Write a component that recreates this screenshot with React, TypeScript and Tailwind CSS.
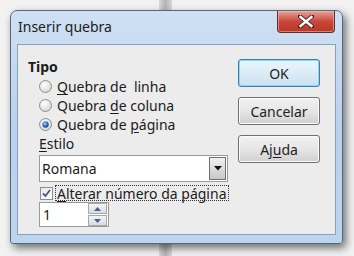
import React from "react";

const font = { fontFamily: '"Noto Sans", "Open Sans", sans-serif' };

function Radio({ checked }: { checked?: boolean }) {
  return (
    <svg width="13" height="13" viewBox="0 0 13 13" className="shrink-0">
      <defs>
        <radialGradient id={checked ? "rgc" : "rgu"} cx="40%" cy="35%" r="70%">
          <stop offset="0%" stopColor="#ffffff" />
          <stop offset="100%" stopColor="#d4d4d4" />
        </radialGradient>
        <radialGradient id="dot" cx="40%" cy="35%" r="70%">
          <stop offset="0%" stopColor="#9fd1f2" />
          <stop offset="60%" stopColor="#2a6fb4" />
          <stop offset="100%" stopColor="#1b3f6e" />
        </radialGradient>
      </defs>
      <circle cx="6.5" cy="6.5" r="6" fill={`url(#${checked ? "rgc" : "rgu"})`} stroke="#8e8f8f" />
      {checked && <circle cx="6.5" cy="6.5" r="3.2" fill="url(#dot)" />}
    </svg>
  );
}

function U({ children }: { children: React.ReactNode }) {
  return <span className="underline underline-offset-2 decoration-1">{children}</span>;
}

function Btn({ children, def }: { children: React.ReactNode; def?: boolean }) {
  return (
    <div
      className={
        "w-[82px] h-[28px] rounded-[3px] flex items-center justify-center text-[14px] text-[#1e1e1e] " +
        (def
          ? "border border-[#3c7fb1] bg-gradient-to-b from-[#eaf6fd] via-[#dcecf6] to-[#c9e0ee] shadow-[inset_0_0_0_1px_#8fd3f5]"
          : "border border-[#707070] bg-gradient-to-b from-[#f2f2f2] via-[#e6e6e6] to-[#d0d0d0] shadow-[inset_0_0_0_1px_#fcfcfc]")
      }
    >
      {children}
    </div>
  );
}

export default function App() {
  return (
    <div className="w-[354px] h-[256px] relative overflow-hidden bg-[#f2f2f2]" style={font}>
      {/* background decor behind window */}
      <div className="absolute left-[159px] top-0 w-[13px] h-[12px] bg-gradient-to-r from-[#d8d8d8] via-[#b4b4b4] to-[#d8d8d8]" />
      <div className="absolute left-[159px] top-[243px] w-[13px] h-[13px] bg-gradient-to-r from-[#d8d8d8] via-[#b4b4b4] to-[#d8d8d8]" />

      {/* window */}
      <div className="absolute left-[10px] top-[10px] w-[333px] h-[234px] rounded-t-[7px] rounded-b-[3px] border border-[#56687c] bg-gradient-to-b from-[#cfe0f3] via-[#b9d1ec] to-[#bcd4ee] shadow-[3px_4px_8px_rgba(0,0,0,0.55)] flex flex-col">
        {/* title */}
        <div className="h-[33px] flex items-center pl-[7px] relative">
          <span className="text-[14px] text-[#1b1b1b] -mt-[2px]">Inserir quebra</span>
          <div className="absolute right-[7px] top-0 w-[58px] h-[22px] rounded-b-[4px] border border-t-0 border-[#5a3030] bg-gradient-to-b from-[#e6a197] via-[#c8463a] to-[#b93826] flex items-center justify-center shadow-[inset_0_0_0_1px_rgba(255,200,190,0.5)]">
            <svg width="16" height="13" viewBox="0 0 16 13">
              <path d="M2 1.5 L14 11.5 M14 1.5 L2 11.5" stroke="#3a2020" strokeWidth="4.2" strokeLinecap="square" />
              <path d="M2.5 2 L13.5 11 M13.5 2 L2.5 11" stroke="#ffffff" strokeWidth="2.4" strokeLinecap="square" />
            </svg>
          </div>
        </div>
        {/* client */}
        <div className="mx-[6px] mb-[8px] flex-1 border border-[#8a9fb8] bg-[#ececec] flex">
          <div className="w-[204px] shrink-0 pl-[10px] pt-[12px] flex flex-col text-[14px] text-[#1b1b1b]">
            <div className="font-bold h-[20px] leading-[20px]">Tipo</div>
            <div className="pl-[11px] flex flex-col">
              <div className="h-[19px] flex items-center gap-[5px]">
                <Radio />
                <span className="whitespace-pre"><U>Q</U>uebra de  linha</span>
              </div>
              <div className="h-[19px] flex items-center gap-[5px]">
                <Radio />
                <span>Quebra <U>d</U>e coluna</span>
              </div>
              <div className="h-[19px] flex items-center gap-[5px]">
                <Radio checked />
                <span>Quebra de <U>p</U>ágina</span>
              </div>
              <div className="h-[20px] leading-[20px]"><U>E</U>stilo</div>
              <div className="mt-[1px] w-[189px] h-[27px] border border-[#9a9a9a] bg-white flex items-center pl-[2px] pr-[1px]">
                <span className="flex-1">Romana</span>
                <div className="w-[17px] h-[23px] border border-[#707070] bg-gradient-to-b from-[#f0f0f0] to-[#c8c8c8] flex items-center justify-center">
                  <svg width="8" height="5" viewBox="0 0 8 5"><path d="M0 0 H8 L4 4.5 Z" fill="#111" /></svg>
                </div>
              </div>
              <div className="mt-[3px] h-[16px] flex items-center whitespace-nowrap">
                <div className="w-[13px] h-[13px] ml-[1px] shrink-0 border border-[#8e8f8f] bg-gradient-to-br from-[#e8e8e8] to-[#ffffff] flex items-center justify-center">
                  <svg width="9" height="9" viewBox="0 0 9 9"><path d="M1 4.5 L3.5 7 L8 1" fill="none" stroke="#3b5b8c" strokeWidth="1.8" /></svg>
                </div>
                <div className="ml-[2px] h-[16px] flex items-center border border-dotted border-[#333] px-[1px] shrink-0">
                  <span className="whitespace-nowrap"><U>A</U>lterar número da página</span>
                </div>
              </div>
              <div className="mt-[1px] w-[70px] h-[25px] border border-[#9a9a9a] bg-white flex items-center">
                <span className="flex-1 pl-[3px]">1</span>
                <div className="w-[20px] h-[23px] flex flex-col gap-[1px] pr-[1px]">
                  <div className="flex-1 border border-[#a8a8a8] bg-gradient-to-b from-[#f4f4f4] to-[#d6dce4] flex items-center justify-center">
                    <svg width="7" height="4" viewBox="0 0 7 4"><path d="M0 4 H7 L3.5 0 Z" fill="#4d6185" /></svg>
                  </div>
                  <div className="flex-1 border border-[#a8a8a8] bg-gradient-to-b from-[#f4f4f4] to-[#d6dce4] flex items-center justify-center">
                    <svg width="7" height="4" viewBox="0 0 7 4"><path d="M0 0 H7 L3.5 4 Z" fill="#4d6185" /></svg>
                  </div>
                </div>
              </div>
            </div>
          </div>
          <div className="flex-1 pl-[16px] pt-[14px] flex flex-col gap-[10px]">
            <Btn def>OK</Btn>
            <Btn>Cancelar</Btn>
            <Btn>Aj<U>u</U>da</Btn>
          </div>
        </div>
      </div>
    </div>
  );
}
